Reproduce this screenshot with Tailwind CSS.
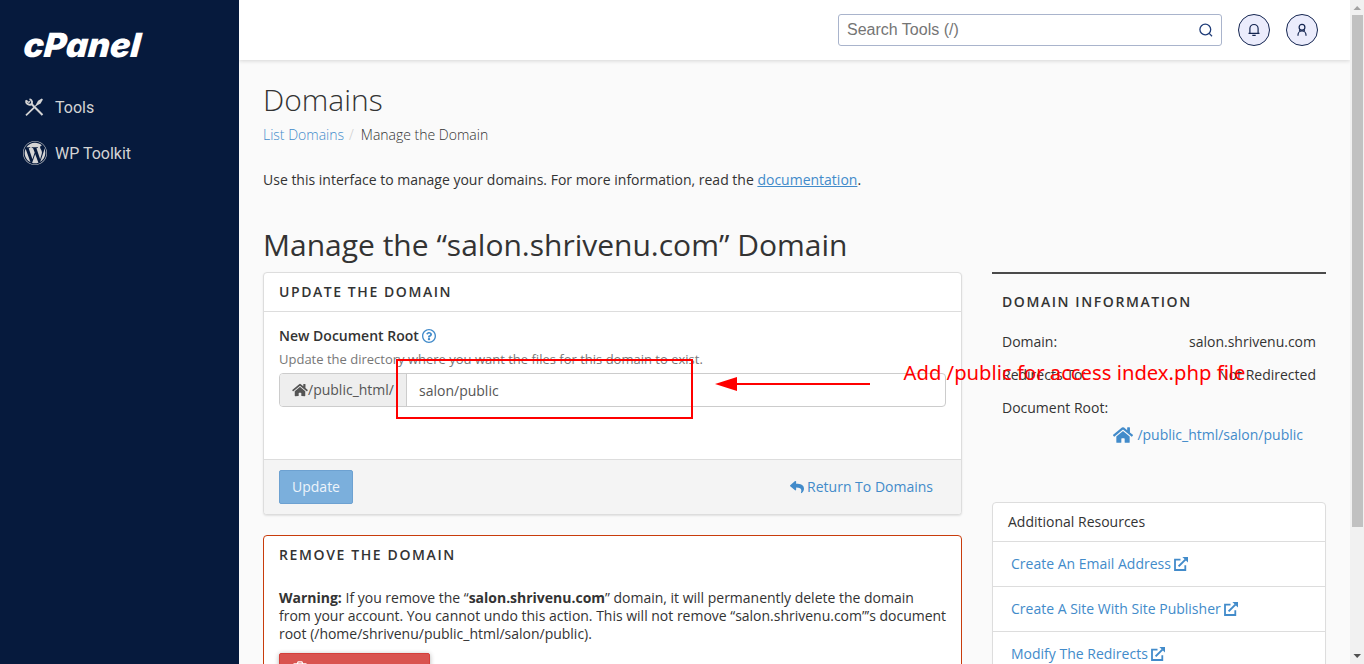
<!DOCTYPE html>
<html lang="en">
<head>
<meta charset="utf-8">
<title>cPanel - Domains</title>
<script src="https://cdn.jsdelivr.net/npm/@tailwindcss/browser@4"></script>
</head>
<body class="relative flex h-[664px] w-[1364px] overflow-hidden bg-[#fafafa] font-['Open_Sans',sans-serif] text-[14px] leading-[18px] text-[#333]">
<svg class="hidden">
  <symbol id="home" viewBox="0 0 576 512"><path fill="currentColor" d="M280.37 148.26L96 300.11V464a16 16 0 0 0 16 16l112.06-.29a16 16 0 0 0 15.92-16V368a16 16 0 0 1 16-16h64a16 16 0 0 1 16 16v95.64a16 16 0 0 0 16 16.05L464 480a16 16 0 0 0 16-16V300L295.67 148.26a12.19 12.19 0 0 0-15.3 0zM571.6 251.47L488 182.56V44.05a12 12 0 0 0-12-12h-56a12 12 0 0 0-12 12v72.61L318.47 43a48 48 0 0 0-61 0L4.34 251.47a12 12 0 0 0-1.6 16.9l25.5 31A12 12 0 0 0 45.15 301l235.22-193.74a12.19 12.19 0 0 1 15.3 0L530.9 301a12 12 0 0 0 16.9-1.6l25.5-31a12 12 0 0 0-1.7-16.93z"/></symbol>
  <symbol id="ext" viewBox="0 0 14 14"><path d="M6.5 2.7H1v10.3h10.3V8.3" fill="none" stroke="currentColor" stroke-width="1.8"/><path d="M4.6 9.4L11.4 2.6" stroke="currentColor" stroke-width="2"/><path d="M8.4 0H14v5.6z" fill="currentColor"/></symbol>
</svg>

<aside class="h-full w-[239px] shrink-0 bg-[#061a3d] pl-[22px] pt-[20px] font-[Roboto,sans-serif] text-[16px] text-[#d4d4d4]">
  <svg class="block h-[50px] w-[130px]" viewBox="0 0 130 50"><text transform="translate(0.8 37) skewX(-5)" x="0" y="0" textLength="117" lengthAdjust="spacingAndGlyphs" font-family="Inter, sans-serif" font-weight="900" font-style="italic" font-size="33.5" fill="#fff">cPanel</text></svg>
  <nav class="mt-[25px] flex flex-col gap-[22px]">
    <a class="flex h-6 items-center gap-[8px]">
      <svg class="size-6 shrink-0" viewBox="0 0 24 24" fill="none" stroke="#d4d4d4"><path d="M9.3 8.8L20.5 20" stroke-width="2"/><path d="M4 20.4L12.3 12.4" stroke-width="1.8"/><path d="M4.1 5.4C3.7 8.3 6 10.3 8.9 9.5 10.7 8.3 10.6 5 7.5 4.1" stroke-width="1.9"/><path d="M4.2 5.2L6.8 7.4 8.1 6.2" stroke-width="1.2"/><path d="M14.2 9.2L16 5.8 19.8 3.5 20.9 4.6 18.6 8.6 15.3 10.3z" fill="#d4d4d4" stroke="none"/><path d="M13.2 11.4L15.5 9" stroke-width="1.2"/></svg>
      <span class="ml-px pt-[2px]">Tools</span>
    </a>
    <a class="flex h-6 items-center gap-[8px]">
      <svg class="ml-px size-6 shrink-0" viewBox="8 8 496 496"><path fill="#d4d4d4" d="M61.7 169.4l101.5 278C92.2 413 43.3 340.2 43.3 256c0-30.9 6.6-60.1 18.4-86.6zm337.9 75.9c0-26.3-9.4-44.5-17.5-58.7-10.8-17.5-20.9-32.4-20.9-49.9 0-19.6 14.8-37.8 35.7-37.8.9 0 1.8.1 2.8.2-37.9-34.7-88.3-55.9-143.7-55.9-74.3 0-139.7 38.1-177.8 95.9 5 .2 9.7.3 13.7.3 22.2 0 56.7-2.7 56.7-2.7 11.5-.7 12.8 16.2 1.4 17.5 0 0-11.5 1.3-24.3 2l77.5 230.4L249.8 247l-33.1-90.8c-11.5-.7-22.3-2-22.3-2-11.5-.7-10.1-18.2 1.3-17.5 0 0 35.1 2.7 56 2.7 22.2 0 56.7-2.7 56.7-2.7 11.5-.7 12.8 16.2 1.4 17.5 0 0-11.5 1.3-24.3 2l76.9 228.7 21.2-70.9c9-29.4 16-50.5 16-68.7zm-139.9 29.3l-63.8 185.5c19.1 5.6 39.2 8.7 60.1 8.7 24.8 0 48.5-4.3 70.6-12.1-.6-.9-1.1-1.9-1.5-2.9l-65.4-179.2zm183-120.7c.9 6.8 1.4 14 1.4 21.9 0 21.6-4 45.8-16.2 76.2l-65 187.9C426.2 403 468.7 334.5 468.7 256c0-37-9.4-71.8-26-102.1zM504 256c0 136.8-111.3 248-248 248C119.2 504 8 392.7 8 256 8 119.2 119.2 8 256 8c136.7 0 248 111.2 248 248zm-11.4 0c0-130.5-106.2-236.6-236.6-236.6C125.5 19.4 19.4 125.5 19.4 256S125.6 492.6 256 492.6c130.5 0 236.6-106.1 236.6-236.6z"/></svg>
      <span class="pt-[2px]">WP Toolkit</span>
    </a>
  </nav>
</aside>

<div class="flex h-full w-[1111px] shrink-0 flex-col overflow-hidden">
  <header class="flex h-[60px] shrink-0 items-center justify-end gap-4 bg-white pr-8 shadow-[0_1px_4px_rgba(0,0,0,0.15)]">
    <div class="flex h-8 w-[384px] items-center justify-between rounded-[3px] border border-[#a9b4cc] bg-white pl-2 pr-[7px] font-['Liberation_Sans',sans-serif] text-[16px] text-[#757575]">
      <span>Search Tools (/)</span>
      <svg class="size-4" viewBox="0 0 16 16" fill="none" stroke="#1f3c78" stroke-width="1.3"><circle cx="7.3" cy="7.5" r="5.4"/><path d="M11.2 11.4L14 14.2"/></svg>
    </div>
    <div class="flex size-8 items-center justify-center rounded-full border border-[#142550] bg-[#ebecfc]">
      <svg class="size-4" viewBox="0 0 16 16" fill="none" stroke="#142550" stroke-width="1.2"><path d="M2.5 11.4H13.5M3.9 11.2V6.6a4.1 4.1 0 0 1 8.2 0v4.6M6.3 13.4h3.4"/></svg>
    </div>
    <div class="flex size-8 items-center justify-center rounded-full border border-[#142550] bg-[#ebecfc]">
      <svg class="size-4" viewBox="0 0 16 16" fill="none" stroke="#142550" stroke-width="1.2"><circle cx="8" cy="5.3" r="2.9"/><path d="M4 13.8V12.9a4 4 0 0 1 8 0v.9M6 8l-.7.8M10 8l.7.8"/></svg>
    </div>
  </header>

  <main class="flex flex-col pl-6 pr-6">
    <h1 class="mt-[20px] h-10 text-[30px] font-light leading-10">Domains</h1>
    <div class="mt-[6px] flex h-[18px] font-light"><span class="text-[#428bca]">List Domains</span><span class="ml-[5px] text-[#ccc]">/</span><span class="ml-[7px]">Manage the Domain</span></div>
    <p class="mt-[27px]">Use this interface to manage your domains. For more information, read the <a class="text-[#428bca] underline">documentation</a>.</p>
    <h2 class="mt-[36px] h-10 whitespace-nowrap text-[30px] leading-10">Manage the “salon.shrivenu.com” Domain</h2>
    <div class="mt-[7px] flex gap-[30px]">
      <div class="w-[699px] shrink-0">
        <section class="h-[243px] rounded-[4px] border border-[#ddd] bg-white shadow-[0_1px_2px_rgba(0,0,0,0.1)]">
          <h3 class="h-[39px] border-b border-[#ddd] pl-[15px] text-[14px] font-semibold leading-[38px] tracking-[1.57px]">UPDATE THE DOMAIN</h3>
          <div class="h-[147px] px-[15px] pt-[15px]">
            <div class="flex items-center gap-[3px] font-semibold"><span>New Document Root</span>
              <svg class="size-[14px]" viewBox="8 8 496 496"><path fill="#428bca" d="M256 8C119.043 8 8 119.083 8 256c0 136.997 111.043 248 248 248s248-111.003 248-248C504 119.083 392.957 8 256 8zm0 448c-110.532 0-200-89.431-200-200 0-110.495 89.472-200 200-200 110.491 0 200 89.471 200 200 0 110.53-89.431 200-200 200zm107.244-255.2c0 67.052-72.421 68.084-72.421 92.863V300c0 6.627-5.373 12-12 12h-45.647c-6.627 0-12-5.373-12-12v-8.659c0-35.745 27.1-50.034 47.579-61.516 17.561-9.845 28.324-16.541 28.324-29.579 0-17.246-21.999-28.693-39.784-28.693-23.189 0-33.894 10.977-48.942 29.969-4.057 5.12-11.46 6.071-16.666 2.124l-27.824-21.098c-5.107-3.872-6.251-11.066-2.644-16.363C184.846 131.491 214.94 112 261.794 112c49.071 0 101.45 38.304 101.45 88.8zM298 368c0 23.159-18.841 42-42 42s-42-18.841-42-42 18.841-42 42-42 42 18.841 42 42z"/></svg>
            </div>
            <p class="mt-[5px] text-[13px] text-[#777]">Update the directory where you want the files for this domain to exist.</p>
            <div class="mt-[5px] flex h-[34px] w-[667px] overflow-hidden rounded-[4px] border border-[#ccc] text-[#555]">
              <div class="flex w-[127px] shrink-0 items-center border-r border-[#ccc] bg-[#eee] pl-3"><svg class="h-[14px] w-4"><use href="#home"/></svg>/public_html/</div>
              <div class="flex items-center pl-3 pt-[2px]">salon/public</div>
            </div>
          </div>
          <div class="flex h-[55px] items-center justify-between rounded-b-[3px] border-t border-[#ddd] bg-[#f4f4f4] pl-[15px] pr-[28px]">
            <button class="h-[34px] w-[74px] rounded-[2px] border border-[#6da1d1] bg-[#7bafdc] text-[#edf4fb]">Update</button>
            <a class="flex items-center gap-[3px] text-[#428bca]"><svg class="size-[14px]" viewBox="0 0 512 512"><path fill="currentColor" d="M8.309 189.836L184.313 37.851C199.719 24.546 224 35.347 224 56.015v80.053c160.629 1.839 288 34.032 288 186.258 0 61.441-39.581 122.309-83.333 154.132-13.653 9.931-33.111-2.533-28.077-18.631 45.344-145.012-21.507-183.51-176.59-185.742V360c0 20.7-24.3 31.453-39.687 18.164l-176.004-152c-11.071-9.562-11.086-26.753 0-36.328z"/></svg>Return To Domains</a>
          </div>
        </section>
        <section class="mt-5 h-[190px] rounded-[4px] border border-[#c83c0c] bg-white px-[15px]">
          <h3 class="text-[14px] font-semibold leading-[38px] tracking-[1.62px]">REMOVE THE DOMAIN</h3>
          <p class="mt-[15px] whitespace-nowrap tracking-[-0.01px]"><b>Warning:</b> If you remove the “<b>salon.shrivenu.com</b>” domain, it will permanently delete the domain<br>from your account. You cannot undo this action. This will not remove “salon.shrivenu.com”’s document<br>root (/home/shrivenu/public_html/salon/public).</p>
          <div class="mt-[10px] h-[34px] w-[151px] rounded-[2px] border border-[#d43f3a] bg-[#d9534f] pl-[13px] pt-[7px] shadow-[0_1px_5px_rgba(0,0,0,0.3)]">
            <svg class="h-4 w-[14px]" viewBox="0 0 14 16" fill="none" stroke="#fff" stroke-width="1.3"><path d="M4.3 2.5L5.2.8h3.6l.9 1.7M.5 2.9h13M2 3v12h10V3"/></svg>
          </div>
        </section>
      </div>

      <div class="w-[334px] shrink-0">
        <section class="h-[230px] border-t-2 border-[#4a4a4a] px-[10px]">
          <h3 class="mt-[19px] text-[14px] font-semibold tracking-[1.58px]">DOMAIN INFORMATION</h3>
          <div class="mt-[22px] flex justify-between"><span>Domain:</span><span>salon.shrivenu.com</span></div>
          <div class="mt-[15px] flex justify-between"><span>Redirects To:</span><span>Not Redirected</span></div>
          <div class="mt-[15px]">Document Root:</div>
          <a class="mt-[9px] flex items-center justify-end gap-[4px] pr-[13px] text-[#428bca]"><svg class="h-[18px] w-[20px]"><use href="#home"/></svg>/public_html/salon/public</a>
        </section>
        <section class="h-[200px] rounded-[4px] border border-[#ddd] bg-white shadow-[0_1px_1px_rgba(0,0,0,0.05)]">
          <h4 class="h-[39px] border-b border-[#ddd] pl-[15px] leading-[38px]">Additional Resources</h4>
          <a class="flex h-[45px] items-center gap-[3px] border-b border-[#ddd] pl-[18px] text-[#428bca]">Create An Email Address<svg class="size-[14px]"><use href="#ext"/></svg></a>
          <a class="flex h-[45px] items-center gap-[3px] border-b border-[#ddd] pl-[18px] text-[#428bca]">Create A Site With Site Publisher<svg class="size-[14px]"><use href="#ext"/></svg></a>
          <a class="flex h-[45px] items-center gap-[3px] border-b border-[#ddd] pl-[18px] text-[#428bca]">Modify The Redirects<svg class="size-[14px]"><use href="#ext"/></svg></a>
        </section>
      </div>
    </div>
  </main>
</div>

<div class="flex h-full w-[14px] shrink-0 flex-col items-center bg-[#f1f1f1]">
  <svg class="h-[15px] w-full shrink-0" viewBox="0 0 14 15"><path d="M3.5 10L7.2 6l3.8 4z" fill="#a3a3a3"/></svg>
  <div class="ml-[1px] h-[512px] w-[11px] bg-[#c1c1c1]"></div>
  <svg class="mt-auto h-[15px] w-full" viewBox="0 0 14 15"><path d="M3.5 5L7.2 9l3.8-4z" fill="#505050"/></svg>
</div>

<!-- Annotation layer -->
<div class="absolute left-[396px] top-[359px] h-[60px] w-[297px] border-2 border-[#f00]"></div>
<svg class="absolute left-[714px] top-[354px] h-[40px] w-[540px]" viewBox="714 354 540 40">
  <path d="M715 384l22-7v14z" fill="#f00"/><path d="M736 384H870" stroke="#f00" stroke-width="2"/>
  <text x="903.5" y="380" textLength="342" lengthAdjust="spacingAndGlyphs" font-family="Noto Sans, sans-serif" font-size="20" fill="#f00">Add /public for access index.php file</text>
</svg>
</body>
</html>
